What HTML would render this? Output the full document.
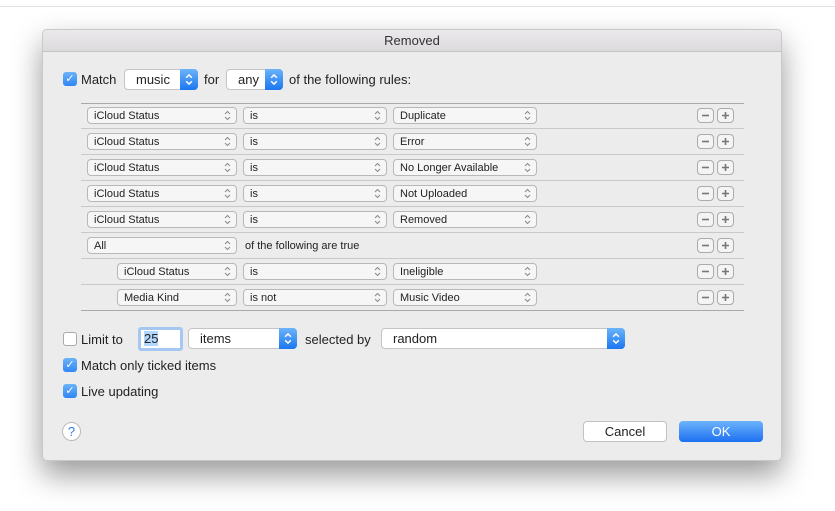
<!DOCTYPE html><html><head><style>
*{box-sizing:border-box;margin:0;padding:0}
body{width:835px;height:511px;background:#fff;position:relative;overflow:hidden;font-family:"Liberation Sans",sans-serif;color:#222}
.a{position:absolute}
#topline{left:0;top:6px;width:835px;height:1px;background:#e2e2e2}
#dlg{left:42px;top:29px;width:740px;height:432px;background:#ececec;border:1px solid #c8c8c8;border-radius:5px;box-shadow:0 14px 30px rgba(0,0,0,.4)}
#tb{left:0;top:0;width:738px;height:22px;background:linear-gradient(#ebe9eb,#dcdadc);border-bottom:1px solid #c4c4c4;text-align:center;font-size:13px;line-height:22px;color:#333;border-radius:5px 5px 0 0}
.t{font-size:13px;line-height:16px;white-space:nowrap}
.s{font-size:11px;line-height:14px;white-space:nowrap}
.pop{height:17px;border:1px solid #b8b8b8;border-radius:4px;background:#f6f6f6;font-size:11px;line-height:16px;padding-left:6px;white-space:nowrap}
.ar{position:absolute;right:5px;top:2px;width:7px;height:11px}
.bp{height:21px;border:1px solid #c4c4c4;border-radius:4px;background:#fff;font-size:13px;line-height:19px;padding-left:11px}
.bl{position:absolute;right:-1px;top:-1px;width:18px;height:21px;border-radius:0 4px 4px 0;background:linear-gradient(#6cb3fa,#1a77f0)}
.bl svg{position:absolute;left:5px;top:4px}
.cb{width:14px;height:14px;border-radius:3px;background:linear-gradient(#6cb3fa,#2f87f5);color:#fff;font-size:11px;line-height:14px;text-align:center}
.hl{height:1px;background:#c9c9c9;left:38px;width:663px}
.pm{width:17px;height:15px;border:1px solid #ababab;border-radius:4px;background:#f4f4f4}
.pm svg{position:absolute;left:3px;top:2px}
</style></head><body>
<svg width="0" height="0" style="position:absolute"><defs>
<symbol id="ud" viewBox="0 0 7 11"><path d="M1 4 L3.5 1.5 L6 4 M1 7 L3.5 9.5 L6 7" fill="none" stroke="#8a8a8a" stroke-width="1"/></symbol>
<symbol id="udw" viewBox="0 0 7 11"><path d="M1 4 L3.5 1.5 L6 4 M1 7 L3.5 9.5 L6 7" fill="none" stroke="#fff" stroke-width="1.3"/></symbol>
<symbol id="mi" viewBox="0 0 9 9"><path d="M1 4.5 H8" stroke="#777" stroke-width="1.6"/></symbol>
<symbol id="pl" viewBox="0 0 9 9"><path d="M1 4.5 H8 M4.5 1 V8" stroke="#777" stroke-width="1.6"/></symbol>
</defs></svg>
<div class="a" id="topline"></div>
<div class="a" id="dlg">
<div class="a" id="tb">Removed</div>
<div class="a cb" style="left:20px;top:42px">✓</div>
<div class="a t" style="left:38px;top:42px">Match</div>
<div class="a bp" style="left:81px;top:39px;width:74px">music<div class="bl"><svg width="8" height="13"><use href="#udw"/></svg></div></div>
<div class="a t" style="left:161px;top:42px">for</div>
<div class="a bp" style="left:183px;top:39px;width:57px">any<div class="bl"><svg width="8" height="13"><use href="#udw"/></svg></div></div>
<div class="a t" style="left:246px;top:42px">of the following rules:</div>
<div class="a hl" style="top:73px;background:#a9a9a9"></div>
<div class="a hl" style="top:98px"></div><div class="a hl" style="top:124px"></div><div class="a hl" style="top:150px"></div><div class="a hl" style="top:176px"></div><div class="a hl" style="top:202px"></div><div class="a hl" style="top:228px"></div><div class="a hl" style="top:254px"></div><div class="a hl" style="top:280px;background:#a9a9a9"></div>
<div class="a pop" style="left:44px;top:77px;width:150px">iCloud Status<svg class="ar"><use href="#ud"/></svg></div><div class="a pop" style="left:200px;top:77px;width:144px">is<svg class="ar"><use href="#ud"/></svg></div><div class="a pop" style="left:350px;top:77px;width:144px">Duplicate<svg class="ar"><use href="#ud"/></svg></div>
<div class="a pop" style="left:44px;top:103px;width:150px">iCloud Status<svg class="ar"><use href="#ud"/></svg></div><div class="a pop" style="left:200px;top:103px;width:144px">is<svg class="ar"><use href="#ud"/></svg></div><div class="a pop" style="left:350px;top:103px;width:144px">Error<svg class="ar"><use href="#ud"/></svg></div>
<div class="a pop" style="left:44px;top:129px;width:150px">iCloud Status<svg class="ar"><use href="#ud"/></svg></div><div class="a pop" style="left:200px;top:129px;width:144px">is<svg class="ar"><use href="#ud"/></svg></div><div class="a pop" style="left:350px;top:129px;width:144px">No Longer Available<svg class="ar"><use href="#ud"/></svg></div>
<div class="a pop" style="left:44px;top:155px;width:150px">iCloud Status<svg class="ar"><use href="#ud"/></svg></div><div class="a pop" style="left:200px;top:155px;width:144px">is<svg class="ar"><use href="#ud"/></svg></div><div class="a pop" style="left:350px;top:155px;width:144px">Not Uploaded<svg class="ar"><use href="#ud"/></svg></div>
<div class="a pop" style="left:44px;top:181px;width:150px">iCloud Status<svg class="ar"><use href="#ud"/></svg></div><div class="a pop" style="left:200px;top:181px;width:144px">is<svg class="ar"><use href="#ud"/></svg></div><div class="a pop" style="left:350px;top:181px;width:144px">Removed<svg class="ar"><use href="#ud"/></svg></div>
<div class="a pop" style="left:44px;top:207px;width:150px">All<svg class="ar"><use href="#ud"/></svg></div><div class="a s" style="left:202px;top:209px">of the following are true</div>
<div class="a pop" style="left:74px;top:233px;width:120px">iCloud Status<svg class="ar"><use href="#ud"/></svg></div><div class="a pop" style="left:200px;top:233px;width:144px">is<svg class="ar"><use href="#ud"/></svg></div><div class="a pop" style="left:350px;top:233px;width:144px">Ineligible<svg class="ar"><use href="#ud"/></svg></div>
<div class="a pop" style="left:74px;top:259px;width:120px">Media Kind<svg class="ar"><use href="#ud"/></svg></div><div class="a pop" style="left:200px;top:259px;width:144px">is not<svg class="ar"><use href="#ud"/></svg></div><div class="a pop" style="left:350px;top:259px;width:144px">Music Video<svg class="ar"><use href="#ud"/></svg></div>
<div class="a pm" style="left:654px;top:78px"><svg width="9" height="9"><use href="#mi"/></svg></div><div class="a pm" style="left:674px;top:78px"><svg width="9" height="9"><use href="#pl"/></svg></div>
<div class="a pm" style="left:654px;top:104px"><svg width="9" height="9"><use href="#mi"/></svg></div><div class="a pm" style="left:674px;top:104px"><svg width="9" height="9"><use href="#pl"/></svg></div>
<div class="a pm" style="left:654px;top:130px"><svg width="9" height="9"><use href="#mi"/></svg></div><div class="a pm" style="left:674px;top:130px"><svg width="9" height="9"><use href="#pl"/></svg></div>
<div class="a pm" style="left:654px;top:156px"><svg width="9" height="9"><use href="#mi"/></svg></div><div class="a pm" style="left:674px;top:156px"><svg width="9" height="9"><use href="#pl"/></svg></div>
<div class="a pm" style="left:654px;top:182px"><svg width="9" height="9"><use href="#mi"/></svg></div><div class="a pm" style="left:674px;top:182px"><svg width="9" height="9"><use href="#pl"/></svg></div>
<div class="a pm" style="left:654px;top:208px"><svg width="9" height="9"><use href="#mi"/></svg></div><div class="a pm" style="left:674px;top:208px"><svg width="9" height="9"><use href="#pl"/></svg></div>
<div class="a pm" style="left:654px;top:234px"><svg width="9" height="9"><use href="#mi"/></svg></div><div class="a pm" style="left:674px;top:234px"><svg width="9" height="9"><use href="#pl"/></svg></div>
<div class="a pm" style="left:654px;top:260px"><svg width="9" height="9"><use href="#mi"/></svg></div><div class="a pm" style="left:674px;top:260px"><svg width="9" height="9"><use href="#pl"/></svg></div>
<div class="a" style="left:20px;top:302px;width:14px;height:14px;border:1px solid #aaa;border-radius:3px;background:#fff"></div>
<div class="a t" style="left:38px;top:302px">Limit to</div>
<div class="a" style="left:95px;top:297px;width:45px;height:24px;border:3px solid #a5c8f2;border-radius:3px;background:#fff;font-size:13px;line-height:18px;padding-left:3px"><span style="background:#b3d6fd">25</span></div>
<div class="a bp" style="left:145px;top:298px;width:109px">items<div class="bl"><svg width="8" height="13"><use href="#udw"/></svg></div></div>
<div class="a t" style="left:262px;top:302px">selected by</div>
<div class="a bp" style="left:338px;top:298px;width:244px">random<div class="bl"><svg width="8" height="13"><use href="#udw"/></svg></div></div>
<div class="a cb" style="left:20px;top:328px">✓</div><div class="a t" style="left:38px;top:328px">Match only ticked items</div>
<div class="a cb" style="left:20px;top:354px">✓</div><div class="a t" style="left:38px;top:354px">Live updating</div>
<div class="a" style="left:19px;top:392px;width:19px;height:19px;border:1px solid #bbb;border-radius:50%;background:#fff;color:#2d7cf0;font-size:13px;line-height:17px;text-align:center">?</div>
<div class="a" style="left:540px;top:391px;width:84px;height:21px;border:1px solid #c2c2c2;border-radius:4px;background:#fff;font-size:13px;line-height:19px;text-align:center">Cancel</div>
<div class="a" style="left:636px;top:391px;width:84px;height:21px;border-radius:4px;background:linear-gradient(#6db3fb,#1d70f2);color:#fff;font-size:13px;line-height:21px;text-align:center">OK</div>
</div>
</body></html>
